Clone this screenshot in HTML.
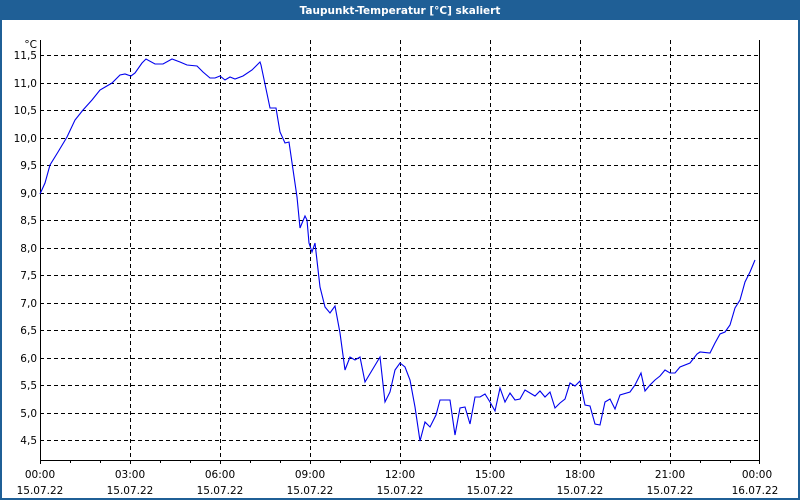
<!DOCTYPE html>
<html><head><meta charset="utf-8"><style>
html,body{margin:0;padding:0;background:#fff}
#w{position:relative;width:800px;height:500px;overflow:hidden;font-family:"DejaVu Sans","Liberation Sans",sans-serif}
</style></head><body><div id="w">
<svg width="800" height="500" xmlns="http://www.w3.org/2000/svg" font-family="DejaVu Sans, Liberation Sans, sans-serif" font-size="10.5">
<rect x="0" y="0" width="800" height="500" fill="#fff"/>
<rect x="0" y="0" width="800" height="20" fill="#1f5f96"/>
<rect x="0" y="0" width="2" height="500" fill="#1f5f96"/>
<rect x="798" y="0" width="2" height="500" fill="#1f5f96"/>
<rect x="0" y="498" width="800" height="2" fill="#1f5f96"/>
<text x="400" y="14" text-anchor="middle" fill="#fff" font-weight="bold" font-size="10.5">Taupunkt-Temperatur [°C] skaliert</text>
<g stroke="#000" stroke-width="1" stroke-dasharray="4,3" shape-rendering="crispEdges">
<line x1="40" y1="55.5" x2="760" y2="55.5"/><line x1="40" y1="83.5" x2="760" y2="83.5"/>
<line x1="40" y1="110.5" x2="760" y2="110.5"/><line x1="40" y1="138.5" x2="760" y2="138.5"/>
<line x1="40" y1="165.5" x2="760" y2="165.5"/><line x1="40" y1="193.5" x2="760" y2="193.5"/>
<line x1="40" y1="220.5" x2="760" y2="220.5"/><line x1="40" y1="248.5" x2="760" y2="248.5"/>
<line x1="40" y1="275.5" x2="760" y2="275.5"/><line x1="40" y1="303.5" x2="760" y2="303.5"/>
<line x1="40" y1="330.5" x2="760" y2="330.5"/><line x1="40" y1="358.5" x2="760" y2="358.5"/>
<line x1="40" y1="385.5" x2="760" y2="385.5"/><line x1="40" y1="413.5" x2="760" y2="413.5"/>
<line x1="40" y1="440.5" x2="760" y2="440.5"/>
<line x1="130.5" y1="40" x2="130.5" y2="460"/><line x1="220.5" y1="40" x2="220.5" y2="460"/>
<line x1="310.5" y1="40" x2="310.5" y2="460"/><line x1="400.5" y1="40" x2="400.5" y2="460"/>
<line x1="490.5" y1="40" x2="490.5" y2="460"/><line x1="580.5" y1="40" x2="580.5" y2="460"/>
<line x1="670.5" y1="40" x2="670.5" y2="460"/>
</g>
<g stroke="#000" stroke-width="1" shape-rendering="crispEdges">
<line x1="40.5" y1="40" x2="40.5" y2="461"/><line x1="759.5" y1="40" x2="759.5" y2="461"/>
<line x1="40" y1="460.5" x2="760" y2="460.5"/>
<path d="M40.5 460v4M70.5 460v3M100.5 460v3M130.5 460v4M160.5 460v3M190.5 460v3M220.5 460v4M250.5 460v3M280.5 460v3M310.5 460v4M340.5 460v3M370.5 460v3M400.5 460v4M430.5 460v3M460.5 460v3M490.5 460v4M520.5 460v3M550.5 460v3M580.5 460v4M610.5 460v3M640.5 460v3M670.5 460v4M700.5 460v3M730.5 460v3M759.5 460v4"/>
</g>
<polyline fill="none" stroke="#0000ee" stroke-width="1.1" points="40,194 45,183 50,165 58,152 67,137 75,120 83,110 92,100 100,90 112,83 120,75 125,74 131,76 135,73 142,63 146,59 155,64 163,64 172,59 180,62 187,65 197,66 203,72 210,78 215,78 220,76 225,80 230,77 235,79 243,76 252,70 260,62 261,65 270,108 276,108 280,132 285,143 289,142 297,197 300,228 305,216 307,220 309,243 312,252 315,243 320,287 325,307 330,313 335,306 340,333 345,370 350,357 355,360 360,357 365,382 380,357 385,402 390,392 395,370 400,363 405,367 410,380 415,407 420,441 425,422 430,427 436,415 440,400 450,400 455,435 460,408 465,407 470,424 475,397 480,397 485,394 490,402 495,411 500,388 505,402 510,393 515,400 520,399 525,390 535,396 540,391 545,397 550,392 555,408 560,403 565,399 570,383 575,386 580,381 585,405 590,406 595,424 600,425 605,402 610,399 615,409 620,395 630,392 635,385 641,373 645,391 650,385 655,380 660,376 665,370 670,373 675,373 680,367 690,363 697,354 700,352 710,353 715,343 720,334 725,332 730,325 735,308 740,300 745,282 750,272 755,260"/>
<g fill="#000" text-anchor="end">
<text x="37" y="48">°C</text>
<text x="37" y="59">11,5</text><text x="37" y="87">11,0</text><text x="37" y="114">10,5</text><text x="37" y="142">10,0</text>
<text x="37" y="169">9,5</text><text x="37" y="197">9,0</text><text x="37" y="224">8,5</text><text x="37" y="252">8,0</text>
<text x="37" y="279">7,5</text><text x="37" y="307">7,0</text><text x="37" y="334">6,5</text><text x="37" y="362">6,0</text>
<text x="37" y="389">5,5</text><text x="37" y="417">5,0</text><text x="37" y="444">4,5</text>
</g>
<g fill="#000" text-anchor="middle">
<text x="40" y="478">00:00</text><text x="40" y="494">15.07.22</text>
<text x="130" y="478">03:00</text><text x="130" y="494">15.07.22</text>
<text x="220" y="478">06:00</text><text x="220" y="494">15.07.22</text>
<text x="310" y="478">09:00</text><text x="310" y="494">15.07.22</text>
<text x="400" y="478">12:00</text><text x="400" y="494">15.07.22</text>
<text x="490" y="478">15:00</text><text x="490" y="494">15.07.22</text>
<text x="580" y="478">18:00</text><text x="580" y="494">15.07.22</text>
<text x="670" y="478">21:00</text><text x="670" y="494">15.07.22</text>
<text x="757" y="478">00:00</text><text x="755" y="494">16.07.22</text>
</g>
</svg>
</div></body></html>
